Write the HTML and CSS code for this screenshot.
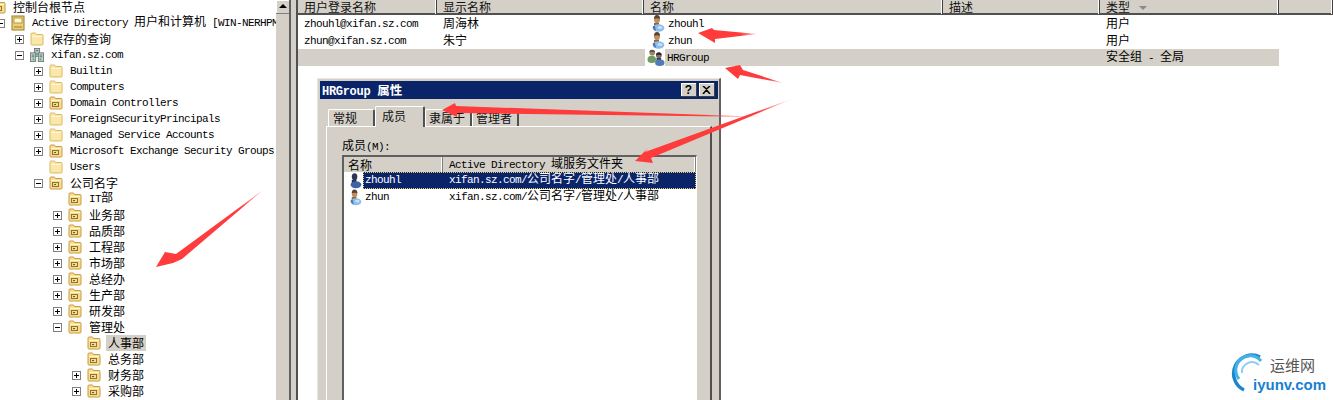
FILE: index.html
```html
<!doctype html>
<html lang="zh">
<head>
  <meta charset="utf-8">
  <title>Active Directory 用户和计算机</title>
  <link rel="stylesheet" href="styles.css">
</head>
<body>

<svg class="defs" width="0" height="0">
  <symbol id="folder" viewBox="0 0 14 14">
    <path d="M1 3.500V2q0-1 1-1h3.500l1 1.500h5.500q1 0 1 1v8.500q0 1-1 1h-10q-1 0-1-1z" fill="#fbe8a8" stroke="#d9b868"/>
    <path d="M2 4.500h10" stroke="#fff6d2"/>
  </symbol>
  <symbol id="ou" viewBox="0 0 14 14">
    <path d="M1 3.500V2q0-1 1-1h3.500l1 1.500h5.500q1 0 1 1v8.500q0 1-1 1h-10q-1 0-1-1z" fill="#f8dd90" stroke="#c69c48"/>
    <path d="M2 4.500h10" stroke="#fff6d2"/>
    <rect x="3.500" y="6.500" width="6" height="4" fill="#f3dc8c" stroke="#8f7430"/>
    <rect x="5" y="8" width="2" height="1" fill="#6e5a20"/>
  </symbol>
  <symbol id="snapin" viewBox="0 0 14 16">
    <rect x="1" y="1" width="12" height="14" fill="#e8cf7c" stroke="#9a7c2c"/>
    <rect x="3" y="3" width="8" height="5" fill="#fff8cf" stroke="#b89a46"/>
    <path d="M3 11h8v2H3z" fill="#c9a548"/>
  </symbol>
  <symbol id="domain" viewBox="0 0 16 16">
    <rect x="5" y="0.500" width="6" height="9" fill="#b9c3c4" stroke="#6c7778"/>
    <rect x="0.500" y="5.500" width="6" height="10" fill="#c6ced0" stroke="#6c7778"/>
    <rect x="9.500" y="5.500" width="6" height="10" fill="#c6ced0" stroke="#6c7778"/>
    <path d="M2 8h3M2 10h3M11 8h3M11 10h3M6.500 3h3" stroke="#59646a"/>
    <path d="M3 12h2v2H3zM11 12h2v2h-2zM7 6h2v2H7z" fill="#39c24a"/>
  </symbol>
  <symbol id="user" viewBox="0 0 14 17">
    <ellipse cx="6" cy="4.500" rx="3" ry="3.800" fill="#c48e58"/>
    <path d="M3 4q0-4 3-4t3 4q-3-1.500-6 0z" fill="#54463a"/>
    <path d="M3 8h5v4H3z" fill="#7d6a58"/>
    <ellipse cx="7.500" cy="13" rx="5.800" ry="3.800" fill="#8fbcea"/>
    <ellipse cx="9" cy="12.500" rx="2.500" ry="1.500" fill="#c6e0f7"/>
    <path d="M2 11q-1 3 3 5l-1-5z" fill="#4f78a8"/>
  </symbol>
  <symbol id="user-sel" viewBox="0 0 14 17">
    <ellipse cx="6" cy="4.500" rx="3" ry="3.800" fill="#2d3658"/>
    <path d="M3 8h5v4H3z" fill="#1e2c54"/>
    <ellipse cx="7.500" cy="13" rx="5.800" ry="3.800" fill="#3e62a6"/>
  </symbol>
  <symbol id="group" viewBox="0 0 18 18">
    <circle cx="5" cy="4" r="3" fill="#a08668"/>
    <path d="M5 0.800q3 0 3 2.700q-3-1-6 0q0-2.700 3-2.700z" fill="#5c5240"/>
    <ellipse cx="4.500" cy="11" rx="4.500" ry="3.800" fill="#6e9a64"/>
    <circle cx="12" cy="7" r="3" fill="#8a6a50"/>
    <path d="M12 3.500q3 0 3 3q-3-1-6 0q0-3 3-3z" fill="#1e2a44"/>
    <path d="M9.500 9.500h5v4h-5z" fill="#2c4468"/>
    <ellipse cx="13" cy="14.500" rx="5" ry="3.500" fill="#4f7bb8"/>
  </symbol>
</svg>

<div class="console">
  <div class="tree">
    <div class="node lv0"><b class="exp none"></b><svg class="ico"><use href="#ou"/></svg><span class="cn lbl">控制台根节点</span></div>
    <div class="node lv1"><b class="exp minus"></b><svg class="ico snap"><use href="#snapin"/></svg><span class="lbl">Active Directory <span class="cn">用户和计算机</span> [WIN-NERHPM</span></div>
    <div class="node lv2"><b class="exp plus"></b><svg class="ico"><use href="#folder"/></svg><span class="cn lbl">保存的查询</span></div>
    <div class="node lv2"><b class="exp minus"></b><svg class="ico"><use href="#domain"/></svg><span class="lbl">xifan.sz.com</span></div>
    <div class="node lv3"><b class="exp plus"></b><svg class="ico"><use href="#folder"/></svg><span class="lbl">Builtin</span></div>
    <div class="node lv3"><b class="exp plus"></b><svg class="ico"><use href="#folder"/></svg><span class="lbl">Computers</span></div>
    <div class="node lv3"><b class="exp plus"></b><svg class="ico"><use href="#ou"/></svg><span class="lbl">Domain Controllers</span></div>
    <div class="node lv3"><b class="exp plus"></b><svg class="ico"><use href="#folder"/></svg><span class="lbl">ForeignSecurityPrincipals</span></div>
    <div class="node lv3"><b class="exp plus"></b><svg class="ico"><use href="#folder"/></svg><span class="lbl">Managed Service Accounts</span></div>
    <div class="node lv3"><b class="exp plus"></b><svg class="ico"><use href="#ou"/></svg><span class="lbl">Microsoft Exchange Security Groups</span></div>
    <div class="node lv3"><b class="exp none"></b><svg class="ico"><use href="#folder"/></svg><span class="lbl">Users</span></div>
    <div class="node lv3"><b class="exp minus"></b><svg class="ico"><use href="#ou"/></svg><span class="cn lbl">公司名字</span></div>
    <div class="node lv4"><b class="exp none"></b><svg class="ico"><use href="#ou"/></svg><span class="lbl">IT<span class="cn">部</span></span></div>
    <div class="node lv4"><b class="exp plus"></b><svg class="ico"><use href="#ou"/></svg><span class="cn lbl">业务部</span></div>
    <div class="node lv4"><b class="exp plus"></b><svg class="ico"><use href="#ou"/></svg><span class="cn lbl">品质部</span></div>
    <div class="node lv4"><b class="exp plus"></b><svg class="ico"><use href="#ou"/></svg><span class="cn lbl">工程部</span></div>
    <div class="node lv4"><b class="exp plus"></b><svg class="ico"><use href="#ou"/></svg><span class="cn lbl">市场部</span></div>
    <div class="node lv4"><b class="exp plus"></b><svg class="ico"><use href="#ou"/></svg><span class="cn lbl">总经办</span></div>
    <div class="node lv4"><b class="exp plus"></b><svg class="ico"><use href="#ou"/></svg><span class="cn lbl">生产部</span></div>
    <div class="node lv4"><b class="exp plus"></b><svg class="ico"><use href="#ou"/></svg><span class="cn lbl">研发部</span></div>
    <div class="node lv4"><b class="exp minus"></b><svg class="ico"><use href="#ou"/></svg><span class="cn lbl">管理处</span></div>
    <div class="node lv5"><b class="exp none"></b><svg class="ico"><use href="#ou"/></svg><span class="cn lbl active">人事部</span></div>
    <div class="node lv5"><b class="exp none"></b><svg class="ico"><use href="#ou"/></svg><span class="cn lbl">总务部</span></div>
    <div class="node lv5"><b class="exp plus"></b><svg class="ico"><use href="#ou"/></svg><span class="cn lbl">财务部</span></div>
    <div class="node lv5"><b class="exp plus"></b><svg class="ico"><use href="#ou"/></svg><span class="cn lbl">采购部</span></div>
  </div>

  <div class="scrollbar"><div class="scroll-up"></div></div>
  <div class="splitter"></div>

  <div class="list">
    <div class="list-head">
      <div class="cn">用户登录名称</div>
      <div class="cn">显示名称</div>
      <div class="cn">名称</div>
      <div class="cn">描述</div>
      <div class="cn">类型<i class="sort"></i></div>
      <div></div>
    </div>
    <div class="list-row">
      <div>zhouhl@xifan.sz.com</div>
      <div class="cn">周海林</div>
      <div class="name"><span class="name-ico"><svg class="person"><use href="#user"/></svg></span>zhouhl</div>
      <div></div>
      <div class="cn">用户</div>
    </div>
    <div class="list-row">
      <div>zhun@xifan.sz.com</div>
      <div class="cn">朱宁</div>
      <div class="name"><span class="name-ico"><svg class="person"><use href="#user"/></svg></span>zhun</div>
      <div></div>
      <div class="cn">用户</div>
    </div>
    <div class="list-row picked">
      <div></div>
      <div></div>
      <div class="name"><span class="name-ico wide"><svg class="team"><use href="#group"/></svg></span>HRGroup</div>
      <div></div>
      <div><span class="cn">安全组</span> - <span class="cn">全局</span></div>
    </div>
  </div>
</div>

<div class="dialog">
  <div class="titlebar">
    <span class="title">HRGroup <span class="title-cn">属性</span></span>
    <span class="cap-btn">?</span>
    <span class="cap-btn close">
      <svg width="9" height="8" viewBox="0 0 9 8"><path d="M1 0l3.500 3L8 0M1 8l3.500-4L8 8" fill="none" stroke="#000" stroke-width="1.500"/></svg>
    </span>
  </div>
  <div class="tabs">
    <span class="cn tab first">常规</span>
    <span class="cn tab on">成员</span>
    <span class="cn tab">隶属于</span>
    <span class="cn tab">管理者</span>
  </div>
  <div class="page">
    <div class="members-label"><span class="cn">成员</span>(M):</div>
    <div class="members">
      <div class="members-head">
        <div class="cn first">名称</div>
        <div>Active Directory <span class="cn">域服务文件夹</span></div>
      </div>
      <div class="member selected">
        <svg class="person small"><use href="#user-sel"/></svg>
        <div class="member-text">
          <span class="member-name">zhouhl</span>
          <span>xifan.sz.com/<span class="cn">公司名字</span>/<span class="cn">管理处</span>/<span class="cn">人事部</span></span>
        </div>
      </div>
      <div class="member">
        <svg class="person small"><use href="#user"/></svg>
        <div class="member-text">
          <span class="member-name">zhun</span>
          <span>xifan.sz.com/<span class="cn">公司名字</span>/<span class="cn">管理处</span>/<span class="cn">人事部</span></span>
        </div>
      </div>
    </div>
  </div>
</div>

<svg class="arrows" width="1333" height="400" viewBox="0 0 1333 400">
  <defs>
    <linearGradient id="fade1" gradientUnits="userSpaceOnUse" x1="170" y1="258" x2="263" y2="190">
      <stop offset="0.750" stop-color="#ff3b3b"/><stop offset="1" stop-color="#ff3b3b" stop-opacity="0.300"/>
    </linearGradient>
    <linearGradient id="fade2" gradientUnits="userSpaceOnUse" x1="715" y1="0" x2="757" y2="0">
      <stop offset="0.600" stop-color="#ff3b3b"/><stop offset="1" stop-color="#ff3b3b" stop-opacity="0.300"/>
    </linearGradient>
    <linearGradient id="fade3" gradientUnits="userSpaceOnUse" x1="738" y1="72" x2="783" y2="83">
      <stop offset="0.700" stop-color="#ff3b3b"/><stop offset="1" stop-color="#ff3b3b" stop-opacity="0.300"/>
    </linearGradient>
    <linearGradient id="fade4" gradientUnits="userSpaceOnUse" x1="455" y1="0" x2="767" y2="0">
      <stop offset="0.800" stop-color="#ff3b3b"/><stop offset="1" stop-color="#ff3b3b" stop-opacity="0.150"/>
    </linearGradient>
    <linearGradient id="fade5" gradientUnits="userSpaceOnUse" x1="650" y1="155" x2="792" y2="99">
      <stop offset="0.750" stop-color="#ff3b3b"/><stop offset="1" stop-color="#ff3b3b" stop-opacity="0.150"/>
    </linearGradient>
  </defs>
  <polygon fill="url(#fade1)" points="263,190 176,254 165,252 156,267 173,263 182,259"/>
  <polygon fill="url(#fade2)" points="757,34 714,30 712,28 698,33 715,43 715,39"/>
  <polygon fill="url(#fade3)" points="783,83 743,70 740,65 725,68 738,79 740,75"/>
  <polygon fill="url(#fade4)" points="767,117 456,106 455,103 442,110 457,117 457,113"/>
  <polygon fill="url(#fade5)" points="792,99 645,152 648,148 635,161 653,163 651,158"/>
</svg>

<div class="watermark">
  <svg class="wm-logo" width="42" height="44" viewBox="0 0 42 44">
    <path d="M30 5A18 18 0 1 0 14 38" fill="none" stroke="#1a86d0" stroke-width="3.500"/>
    <path d="M31 9A14 14 0 0 0 9 27" fill="none" stroke="#45b2e6" stroke-width="3"/>
    <path d="M29 13A10 10 0 0 0 12 21" fill="none" stroke="#8bd0ef" stroke-width="2"/>
  </svg>
  <span class="wm-cn">运维网</span>
  <span class="wm-url">iyunv.com</span>
</div>

</body>
</html>
```

FILE: styles.css
```css
html, body {
  margin: 0;
  height: 400px;
  overflow: hidden;
  background: #fff;
}
body {
  font: 11px/16px "Liberation Mono", "Noto Sans CJK SC", monospace;
  letter-spacing: -0.6px;
  color: #000;
}
.defs {
  position: absolute;
}
.cn {
  font: 12px/1 "Noto Sans CJK SC", sans-serif;
  letter-spacing: 0;
}

.console {
  display: flex;
  height: 400px;
}

/* left tree */
.tree {
  width: 276px;
  flex: none;
  margin-top: -1px;
  overflow: hidden;
}
.node {
  display: flex;
  align-items: center;
  height: 16px;
  white-space: nowrap;
}
.lv0 { margin-left: -23px; }
.lv1 { margin-left: -4px; }
.lv2 { margin-left: 15px; }
.lv3 { margin-left: 34px; }
.lv4 { margin-left: 53px; }
.lv5 { margin-left: 72px; }
.exp {
  width: 7px;
  height: 7px;
  flex: none;
  margin-right: 6px;
  border: 1px solid #808080;
  background: linear-gradient(#000, #000) center / 5px 1px no-repeat;
}
.exp.plus {
  background:
    linear-gradient(#000, #000) center / 5px 1px no-repeat,
    linear-gradient(#000, #000) center / 1px 5px no-repeat;
}
.exp.none {
  visibility: hidden;
}
.ico {
  width: 14px;
  height: 14px;
  flex: none;
  margin-right: 5px;
}
.ico.snap {
  height: 16px;
}
.lbl {
  padding: 0 2px;
  line-height: 16px;
}
.lbl.active {
  background: #d4d0c8;
}

/* scrollbar + splitter */
.scrollbar {
  width: 13px;
  flex: none;
  background: #d4d0c8;
  border-right: 2px solid #606060;
}
.scroll-up {
  position: relative;
  height: 13px;
  border-bottom: 1px solid #808080;
  box-shadow: inset 1px 1px #fff;
}
.scroll-up::after {
  content: "";
  position: absolute;
  left: 3px;
  top: 4px;
  border: 4px solid transparent;
  border-top: 0;
  border-bottom: 4px solid #000;
}
.splitter {
  width: 5px;
  flex: none;
  background: #d4d0c8;
}

/* list pane */
.list {
  flex: 1;
  min-width: 0;
  border-left: 2px solid #505050;
}
.list-head {
  display: grid;
  grid-template-columns: 139px 207px 299px 157px 179px 1fr;
  height: 13px;
  background: #d4d0c8;
  border-bottom: 2px solid #505050;
}
.list-head > div {
  padding-left: 6px;
  border-right: 1px solid #404040;
  box-shadow: inset -1px 0 #fff;
  line-height: 14px;
  color: #111;
}
.sort {
  display: inline-block;
  margin-left: 9px;
  vertical-align: 2px;
  border: 4px solid transparent;
  border-bottom: 0;
  border-top: 4px solid #8a8a8a;
}
.list-row {
  display: grid;
  grid-template-columns: 139px 207px 299px 157px 179px;
  width: 981px;
  height: 17px;
}
.list-row > div {
  height: 17px;
  padding-left: 6px;
  line-height: 19px;
  white-space: nowrap;
}
.list-row > .cn {
  line-height: 15px;
}
.list-row.picked {
  background: #d4d0c8;
}
.list-row .name {
  display: flex;
  padding-left: 1px;
}
.name-ico {
  display: flex;
  align-items: center;
  justify-content: flex-end;
  width: 23px;
  padding-right: 3px;
  box-sizing: border-box;
  background: #fff;
}
.person {
  width: 14px;
  height: 17px;
}
.team {
  width: 18px;
  height: 17px;
}
.name-ico.wide {
  padding-right: 0;
  margin-right: 2px;
  width: 20px;
}

/* properties dialog, floats over the list */
.dialog {
  position: absolute;
  left: 317px;
  top: 78px;
  box-sizing: border-box;
  display: flex;
  flex-direction: column;
  width: 404px;
  height: 322px;
  padding: 2px 1px 0 2px;
  background: #d4d0c8;
  border-top: 1px solid #e8e6e0;
  border-left: 1px solid #e8e6e0;
  border-right: 2px solid #606060;
}
.titlebar {
  display: flex;
  flex: none;
  align-items: center;
  gap: 2px;
  height: 18px;
  padding: 0 3px 0 2px;
  background: #0a246a;
}
.title {
  flex: 1;
  font-weight: bold;
  font-size: 12px;
  letter-spacing: -0.3px;
  color: #fff;
}
.title-cn {
  font: bold 12.500px "Noto Sans CJK SC", sans-serif;
  letter-spacing: 0;
}
.cap-btn {
  display: flex;
  align-items: center;
  justify-content: center;
  width: 15px;
  height: 13px;
  font: bold 12px "Liberation Sans", sans-serif;
  letter-spacing: 0;
  background: #d4d0c8;
  border-right: 1px solid #404040;
  border-bottom: 1px solid #404040;
  box-shadow: inset 1px 1px #fff;
}
.tabs {
  display: flex;
  flex: none;
  align-items: flex-end;
  height: 27px;
  padding-left: 8px;
}
.tab {
  box-sizing: border-box;
  height: 17px;
  width: 47px;
  padding-left: 3px;
  line-height: 16px;
  color: #111;
  border-top: 1px solid #fff;
  border-left: 1px solid #fff;
  border-right: 2px solid #505050;
  border-top-left-radius: 2px;
  border-top-right-radius: 2px;
}
.tab.first {
  padding-left: 4px;
}
.tab.on {
  height: 21px;
  width: 50px;
  margin-bottom: -1px;
  padding-left: 6px;
  line-height: 18px;
  background: #d4d0c8;
  position: relative;
}
.page {
  flex: 1;
  display: flex;
  flex-direction: column;
  min-height: 0;
  box-sizing: border-box;
  margin-left: 6px;
  width: 386px;
  padding: 12px 0 0 15px;
  border-top: 1px solid #fff;
  border-left: 1px solid #fff;
  border-right: 2px solid #505050;
}
.members-label {
  height: 16px;
}
.members {
  flex: 1;
  min-height: 0;
  width: 352px;
  border: 2px solid #606060;
  border-right: 1px solid #fff;
  border-bottom: 0;
  background: #fff;
}
.members-head {
  display: grid;
  grid-template-columns: 99px 1fr;
  height: 15px;
  background: #d4d0c8;
}
.members-head > div {
  padding-left: 6px;
  line-height: 15px;
  white-space: nowrap;
  border-right: 1px solid #808080;
  box-shadow: inset -1px 0 #fff;
}
.members-head > .first {
  padding-left: 4px;
}
.member {
  display: flex;
  align-items: center;
  height: 17px;
  padding-left: 5px;
}
.person.small {
  flex: none;
  width: 13px;
  height: 17px;
  margin-right: 1px;
}
.member-text {
  display: flex;
  flex: 1;
  height: 17px;
  line-height: 17px;
}
.member-name {
  width: 84px;
  padding-left: 2px;
}
.member.selected .member-text {
  color: #fff;
  background: #0a246a;
  outline: 1px dotted #e8c860;
  outline-offset: -1px;
}

/* annotation arrows */
.arrows {
  position: absolute;
  left: 0;
  top: 0;
  pointer-events: none;
}

/* site watermark */
.watermark {
  position: absolute;
  left: 1230px;
  top: 350px;
  width: 100px;
  height: 48px;
  letter-spacing: 0;
}
.wm-logo {
  position: absolute;
  left: 0;
  top: 2px;
}
.wm-cn {
  position: absolute;
  left: 40px;
  top: 5px;
  font: 15px/20px "Noto Sans CJK SC", sans-serif;
  color: #555;
}
.wm-url {
  position: absolute;
  left: 23px;
  top: 25px;
  font: bold 15px/20px "Liberation Sans", sans-serif;
  color: #1a7fd0;
}
```
